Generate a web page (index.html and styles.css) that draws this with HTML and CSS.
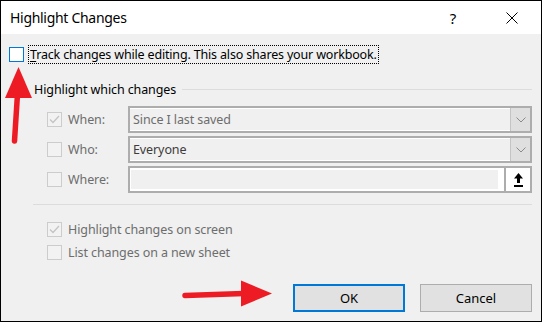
FILE: index.html
```html
<!DOCTYPE html>
<html>
<head>
<meta charset="utf-8">
<link rel="stylesheet" href="styles.css">
</head>
<body>
<div class="dialog">
  <div class="titlebar">
    <span class="title">Highlight Changes</span>
    <span class="help">?</span>
    <span class="close"><svg width="12" height="12" viewBox="0 0 12 12"><path d="M0.5 0.5 L11.5 11.5 M11.5 0.5 L0.5 11.5" stroke="#000" stroke-width="1"/></svg></span>
  </div>
  <div class="body">
    <div class="track-row">
      <span class="cb cb-focus"></span>
      <span class="track-label"><u>T</u>rack changes while editing. This also shares your workbook.</span>
    </div>
    <div class="group">
      <div class="group-head"><span class="group-title">Highlight which changes</span><span class="rule"></span></div>
      <div class="rows">
        <div class="row">
          <span class="cb cb-off"><svg width="13" height="13" viewBox="0 0 13 13"><path d="M2 6.5 L5 9.5 L11 3" fill="none" stroke="#c4c4c4" stroke-width="1.3"/></svg></span>
          <span class="lbl">When:</span>
          <div class="combo">
            <div class="combo-text light">Since I last saved</div>
            <div class="combo-btn"><svg width="10" height="6" viewBox="0 0 10 6"><path d="M0.5 0.5 L5 5 L9.5 0.5" fill="none" stroke="#8a8a8a" stroke-width="1"/></svg></div>
          </div>
        </div>
        <div class="row">
          <span class="cb cb-off"></span>
          <span class="lbl">Who:</span>
          <div class="combo">
            <div class="combo-text dark">Everyone</div>
            <div class="combo-btn"><svg width="10" height="6" viewBox="0 0 10 6"><path d="M0.5 0.5 L5 5 L9.5 0.5" fill="none" stroke="#8a8a8a" stroke-width="1"/></svg></div>
          </div>
        </div>
        <div class="row">
          <span class="cb cb-off"></span>
          <span class="lbl">Where:</span>
          <div class="combo where">
            <div class="where-field"><div class="where-inner"></div></div>
            <div class="ref-btn"><svg width="9" height="14" viewBox="0 0 9 14"><path d="M4.5 0 L9 5.5 L6 5.5 L6 10 L3 10 L3 5.5 L0 5.5 Z" fill="#000"/><rect x="0" y="12" width="9" height="2" fill="#000"/></svg></div>
          </div>
        </div>
      </div>
      <div class="sep"></div>
      <div class="checks">
        <div class="check-row">
          <span class="cb cb-off"><svg width="13" height="13" viewBox="0 0 13 13"><path d="M2 6.5 L5 9.5 L11 3" fill="none" stroke="#c4c4c4" stroke-width="1.3"/></svg></span>
          <span class="lbl">Highlight changes on screen</span>
        </div>
        <div class="check-row">
          <span class="cb cb-off"></span>
          <span class="lbl">List changes on a new sheet</span>
        </div>
      </div>
    </div>
    <div class="buttons">
      <div class="btn btn-default">OK</div>
      <div class="btn">Cancel</div>
    </div>
  </div>
  <svg class="annot" width="542" height="322" viewBox="0 0 542 322">
    <line x1="14.5" y1="141" x2="17.5" y2="94" stroke="#ed1c24" stroke-width="5.5" stroke-linecap="round"/>
    <polygon points="18.5,67 32,98 5,98" fill="#ed1c24"/>
    <line x1="185" y1="295.5" x2="244" y2="293.5" stroke="#ed1c24" stroke-width="5.5" stroke-linecap="round"/>
    <polygon points="241,280.5 272,293.5 241,306.5" fill="#ed1c24"/>
  </svg>
</div>
</body>
</html>
```
FILE: styles.css
```css
* { box-sizing: border-box; }
html, body { margin: 0; padding: 0; background: #f0f0f0; }
body { font-family: "Noto Sans", "Open Sans", sans-serif; }

.dialog {
  position: relative;
  width: 542px;
  height: 322px;
  border: 1px solid #000;
  background: #f0f0f0;
  display: flex;
  flex-direction: column;
}

.titlebar {
  height: 33px;
  background: #fff;
  display: flex;
  align-items: center;
  padding-left: 9px;
  flex: none;
}
.title { font-size: 14px; color: #000; flex: 1; letter-spacing: -0.3px; }
.help { font-size: 15px; color: #000; width: 14px; margin-right: 46px; text-align: center; }
.close { width: 12px; height: 12px; margin-right: 23px; display: flex; }

.body {
  flex: 1;
  display: flex;
  flex-direction: column;
  padding: 0 9px 9px 8px;
  font-size: 12.5px;
}

.cb {
  width: 15px;
  height: 15px;
  flex: none;
  display: flex;
  align-items: center;
  justify-content: center;
}
.cb-focus { border: 1px solid #0078d7; background: #fff; }
.cb-off { border: 1px solid #cccccc; background: #f2f2f2; }

.track-row {
  margin-top: 11px;
  height: 19px;
  display: flex;
  align-items: center;
}
.track-label {
  margin-left: 4px;
  padding: 0 1px 0 1px;
  height: 19px;
  line-height: 17px;
  border: 1px dotted #000;
  color: #000;
  letter-spacing: -0.17px;
}
.track-label u { text-decoration-thickness: 1px; text-underline-offset: 2px; }

.group {
  margin-left: 25px;
  margin-top: 16px;
  display: flex;
  flex-direction: column;
}
.group-head {
  height: 18px;
  display: flex;
  align-items: center;
}
.group-title { color: #000; letter-spacing: -0.1px; }
.rule { flex: 1; height: 1px; background: #dcdcdc; margin-left: 6px; }

.rows {
  margin-top: 8px;
  margin-left: 13px;
  display: flex;
  flex-direction: column;
  gap: 3px;
}
.row {
  height: 27px;
  display: flex;
  align-items: center;
}
.lbl { color: #6d6d6d; margin-left: 6px; letter-spacing: -0.1px; }
.row .lbl { width: 60px; flex: none; }

.combo {
  flex: 1;
  height: 27px;
  border: 2px solid #adadad;
  display: flex;
  background: #f0f0f0;
}
.combo-text {
  flex: 1;
  border-top: 1px solid #fff;
  border-bottom: 1px solid #fff;
  padding-left: 3px;
  line-height: 21px;
  letter-spacing: -0.1px;
}
.combo-text.light { color: #6d6d6d; }
.combo-text.dark { color: #3c3c3c; }
.combo-btn {
  width: 20px;
  flex: none;
  background: #dfdfdf;
  border-left: 1px solid #c4c4c4;
  display: flex;
  align-items: center;
  justify-content: center;
}
.where { background: #fff; }
.where-field { flex: 1; padding: 2px 6px 2px 1px; }
.where-inner { height: 100%; background: #f0f0f0; }
.ref-btn {
  width: 26px;
  flex: none;
  background: #fff;
  border-left: 2px solid #adadad;
  display: flex;
  align-items: center;
  justify-content: center;
}

.sep {
  margin-top: 11px;
  margin-left: -1px;
  height: 1px;
  background: #dcdcdc;
}

.checks {
  margin-top: 14px;
  margin-left: 13px;
  display: flex;
  flex-direction: column;
  gap: 3px;
}
.check-row {
  height: 20px;
  display: flex;
  align-items: center;
}

.buttons {
  margin-top: auto;
  display: flex;
  justify-content: flex-end;
  gap: 15px;
}
.btn {
  width: 112px;
  height: 28px;
  border: 1px solid #adadad;
  background: #e1e1e1;
  color: #000;
  display: flex;
  align-items: center;
  justify-content: center;
  font-size: 13px;
}
.btn-default { border: 2px solid #0078d7; }

.annot {
  position: absolute;
  left: -1px;
  top: -1px;
  pointer-events: none;
}
```
